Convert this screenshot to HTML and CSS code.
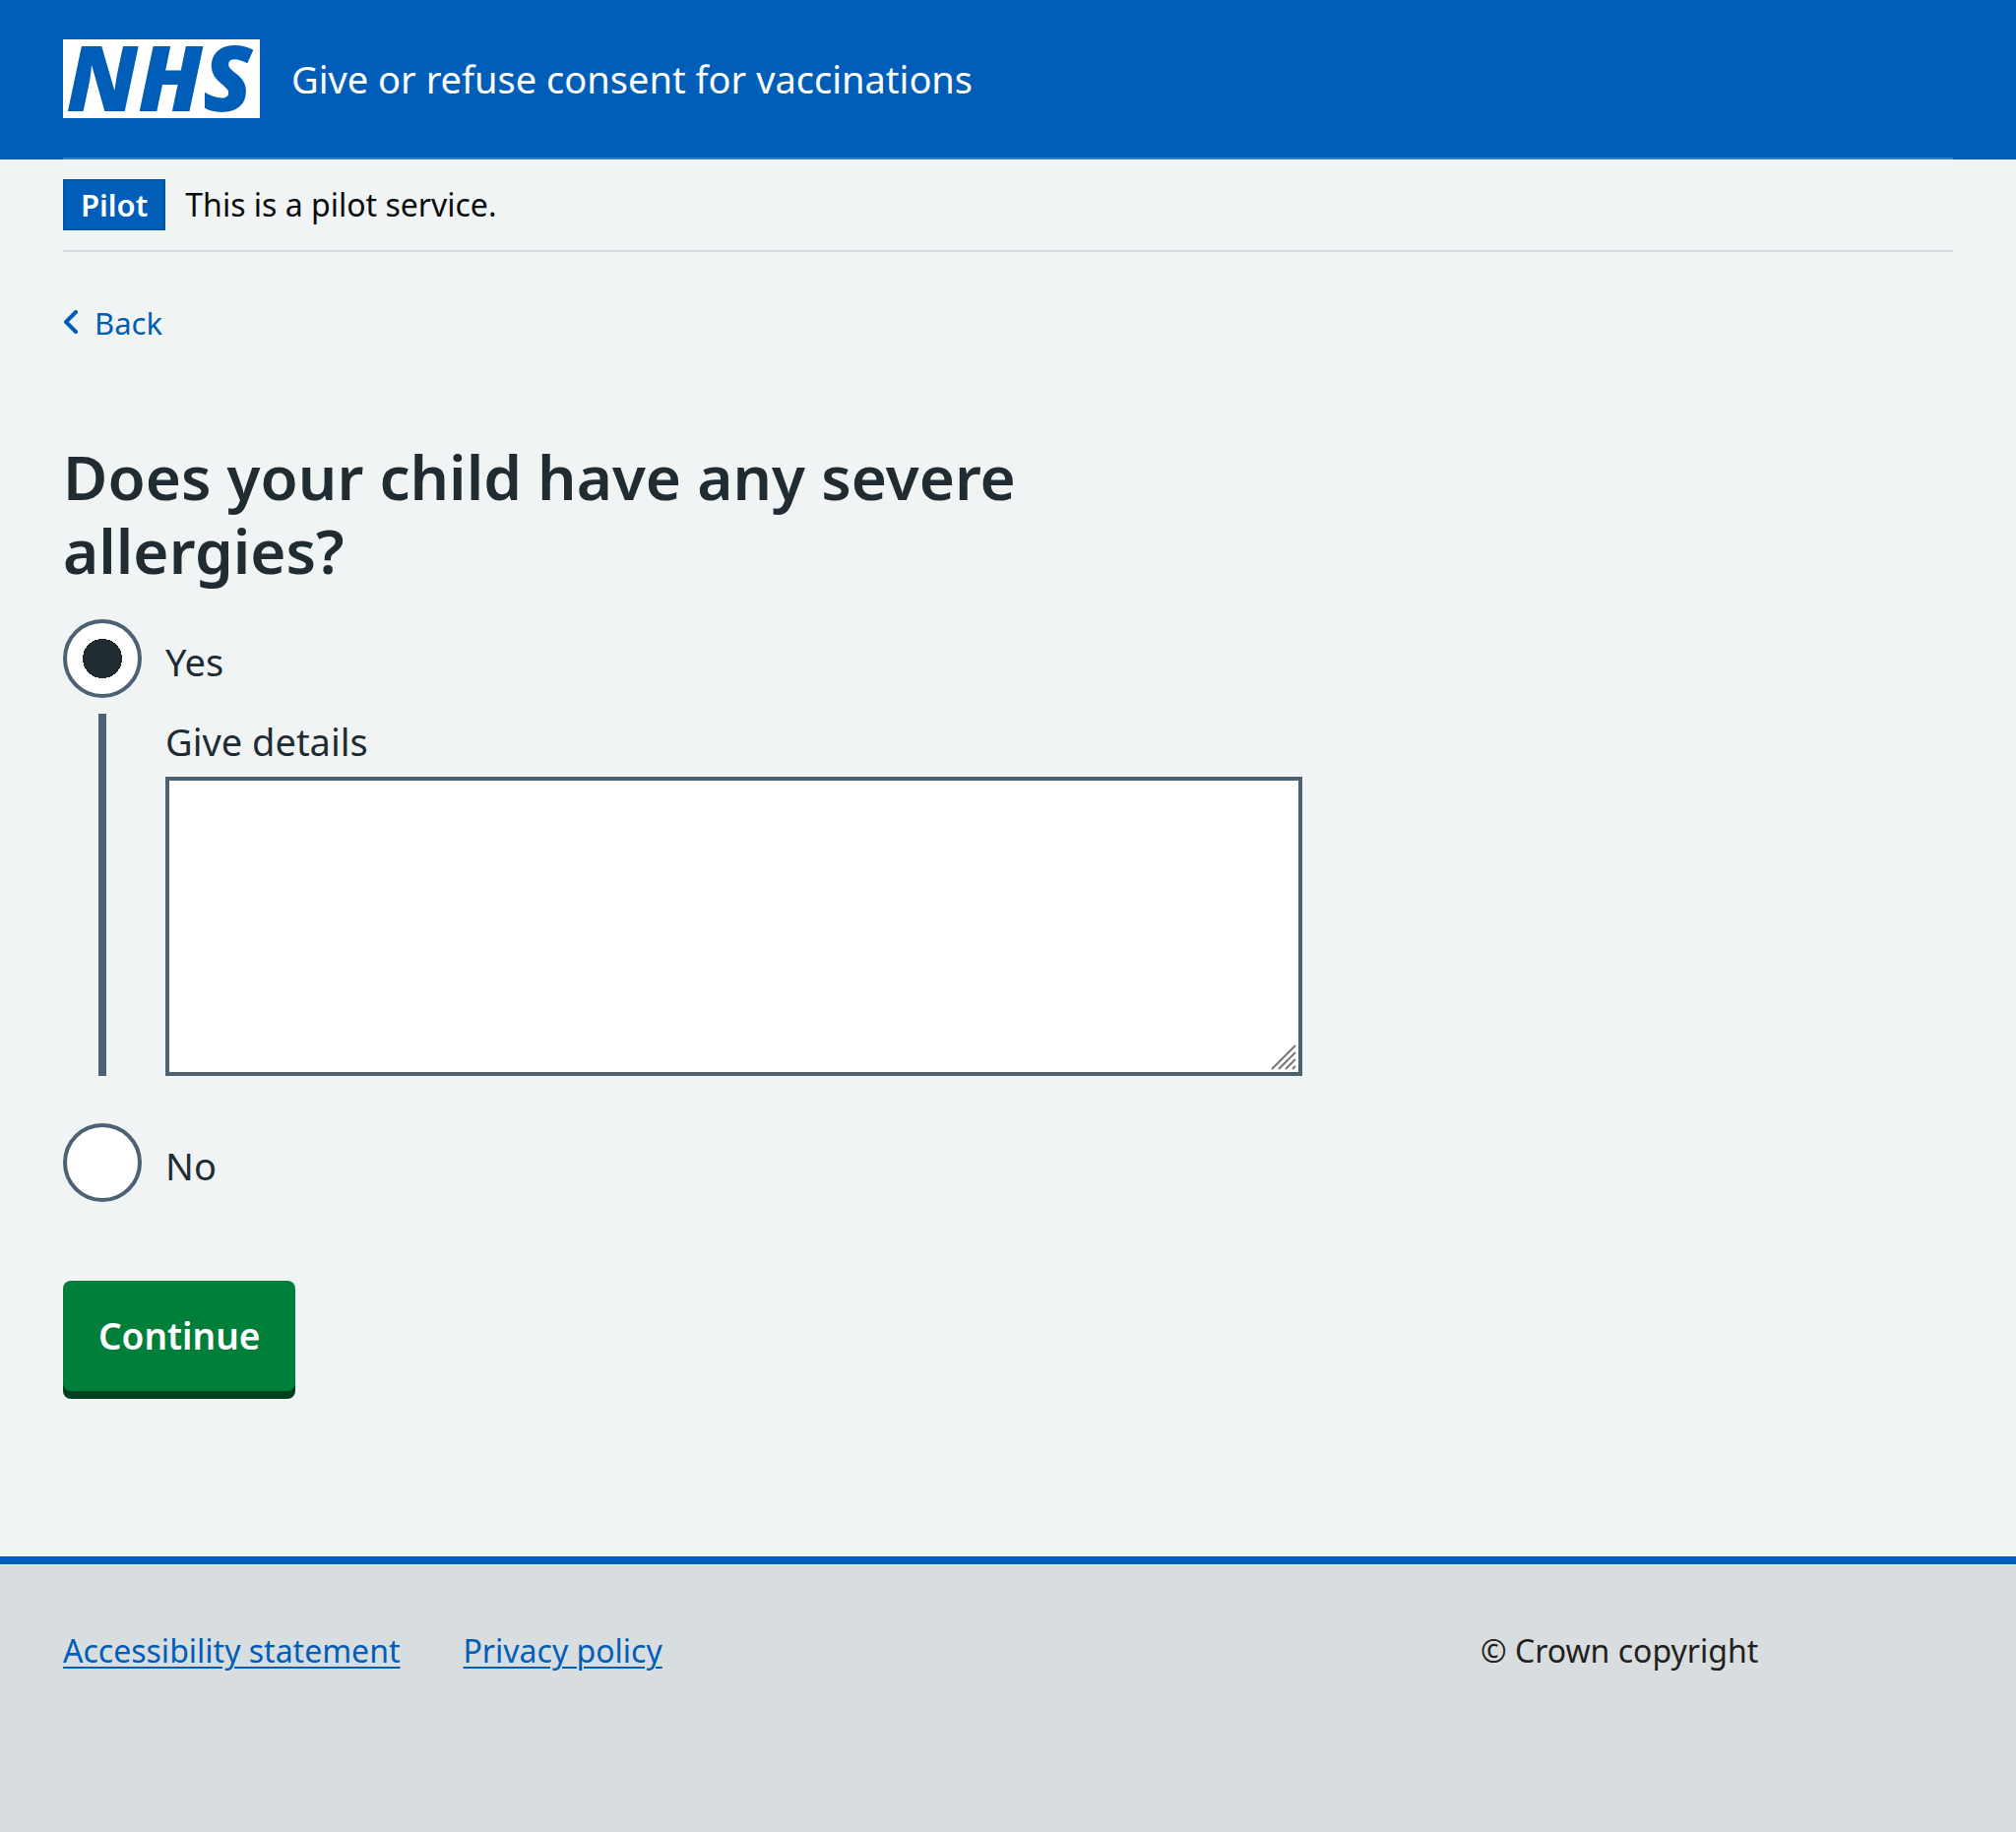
FILE: index.html
```html
<!DOCTYPE html>
<html lang="en">
<head>
<meta charset="utf-8">
<meta name="viewport" content="width=device-width, initial-scale=1">
<title>Does your child have any severe allergies?</title>
<link rel="stylesheet" href="styles.css">
</head>
<body>
<header class="header">
  <div class="container">
    <div class="header-inner">
      <svg class="logo" viewBox="0 0 200 80" role="img" aria-label="NHS">
        <rect width="200" height="80" fill="#fff"/>
        <text class="logo-text" x="98" y="73" text-anchor="middle">NHS</text>
      </svg>
      <span class="service-name">Give or refuse consent for vaccinations</span>
    </div>
  </div>
</header>
<div class="container">
  <div class="phase-banner">
    <strong class="tag">Pilot</strong>
    <span>This is a pilot service.</span>
  </div>
  <a class="back-link" href="#">
    <svg class="chevron" viewBox="0 0 16 26" aria-hidden="true"><path d="M13 2 L3 12 L13 22" fill="none" stroke="currentColor" stroke-width="4" stroke-linecap="round" stroke-linejoin="round"/></svg>
    <span>Back</span>
  </a>
  <main class="main">
    <form>
      <fieldset class="fieldset">
        <legend><h1 class="heading">Does your child have any severe allergies?</h1></legend>
        <div class="radio-row">
          <input class="radio" type="radio" name="allergies" id="yes" checked>
          <label class="radio-label" for="yes">Yes</label>
        </div>
        <div class="conditional">
          <label class="details-label" for="details">Give details</label>
          <div class="textarea-wrap">
            <textarea class="textarea" id="details"></textarea>
            <svg class="grip" viewBox="0 0 26 26" aria-hidden="true"><path d="M1 25 L25 1 M8 25 L25 8 M15 25 L25 15 M22 25 L25 22" stroke="#777" stroke-width="2"/></svg>
          </div>
        </div>
        <div class="radio-row">
          <input class="radio" type="radio" name="allergies" id="no">
          <label class="radio-label" for="no">No</label>
        </div>
      </fieldset>
      <button class="button" type="submit">Continue</button>
    </form>
  </main>
</div>
<footer class="footer">
  <div class="container footer-inner">
    <nav class="footer-links" aria-label="Footer">
      <a href="#">Accessibility statement</a>
      <a href="#">Privacy policy</a>
    </nav>
    <p class="copyright">© Crown copyright</p>
  </div>
</footer>
</body>
</html>
```
FILE: styles.css
```css
* { box-sizing: border-box; }
body {
  margin: 0;
  min-height: 100vh;
  display: flex;
  flex-direction: column;
  background: #f0f4f5;
  color: #212b32;
  font-family: "Noto Sans", "Open Sans", sans-serif;
  font-size: 38px;
  line-height: 56px;
}
.container { padding: 0 64px; }
.header { background: #005eb8; color: #fff; }
.header-inner {
  display: flex;
  align-items: center;
  gap: 32px;
  padding: 40px 0;
  border-bottom: 2px solid #337ec6;
}
.logo { width: 200px; height: 80px; flex: none; overflow: visible; }
.logo-text {
  font: italic 900 92px "Noto Sans", "Open Sans", sans-serif;
  fill: #005eb8;
}
.phase-banner {
  display: flex;
  align-items: center;
  gap: 20px;
  padding: 20px 0;
  border-bottom: 2px solid #d8dde0;
  font-size: 32px;
  line-height: 48px;
  color: #0b0c0c;
}
.tag {
  padding: 0 16px;
  border: 2px solid #0055a6;
  background: #005eb8;
  color: #fff;
  font-size: 31px;
  font-weight: 600;
}
.back-link {
  display: inline-flex;
  align-items: center;
  gap: 16px;
  margin-top: 48px;
  color: #005eb8;
  font-size: 31px;
  line-height: 48px;
  text-decoration: none;
}
.chevron { width: 16px; height: 26px; }
.main { width: calc(66.67% - 21px); padding: 93px 0 168px; }
.fieldset { margin: 0; padding: 0; border: 0; min-width: 0; }
.fieldset legend { padding: 0; }
.heading {
  margin: 0 0 32px;
  font-size: 62px;
  line-height: 75px;
  font-weight: 600;
}
.radio-row { display: flex; align-items: center; gap: 24px; }
.radio-label { padding-top: 6px; }
.radio {
  appearance: none;
  flex: none;
  width: 80px;
  height: 80px;
  margin: 0;
  border: 4px solid #4c6272;
  border-radius: 50%;
  background: #fff;
}
.radio:checked { background: radial-gradient(circle, #212b32 20px, #fff 20px); }
.conditional {
  margin: 16px 0 48px 36px;
  padding-left: 60px;
  border-left: 8px solid #4c6272;
}
.details-label { display: block; padding-bottom: 8px; }
.textarea-wrap { position: relative; }
.textarea {
  display: block;
  width: 100%;
  height: 304px;
  padding: 8px;
  border: 4px solid #4c6272;
  border-radius: 0;
  background: #fff;
  font: inherit;
  resize: none;
}
.grip { position: absolute; right: 6px; bottom: 6px; width: 26px; height: 26px; pointer-events: none; }
.button {
  margin-top: 80px;
  padding: 28px 36px;
  border: 0;
  border-radius: 8px;
  background: #007f3b;
  box-shadow: 0 8px 0 #00401e;
  color: #fff;
  font: inherit;
  font-size: 37px;
  font-weight: 600;
}
.footer {
  flex: 1;
  border-top: 8px solid #005eb8;
  background: #d8dde0;
  font-size: 32px;
  line-height: 48px;
}
.footer-inner { display: flex; padding-top: 64px; padding-bottom: 64px; }
.footer-links { display: flex; gap: 64px; width: 75%; }
.footer-links a { color: #005eb8; text-underline-offset: 4px; text-decoration-thickness: 2px; }
.copyright { margin: 0; color: #231f20; }
```
